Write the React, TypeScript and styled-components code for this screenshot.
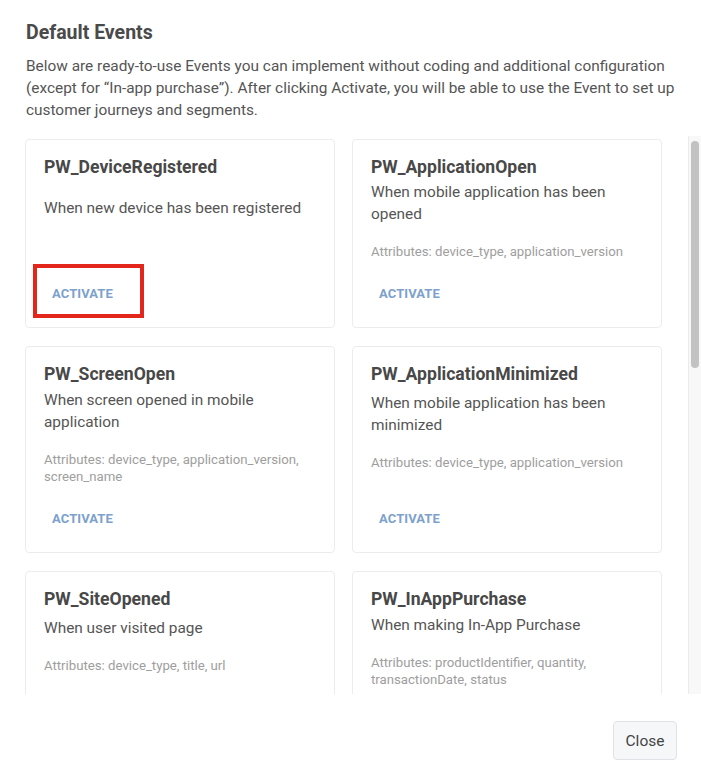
import React from "react";
import styled, { createGlobalStyle } from "styled-components";

const Global = createGlobalStyle`
  html, body { margin: 0; padding: 0; background: #ffffff; }
  body { font-family: Roboto, "Liberation Sans", Arial, sans-serif; }
  * { box-sizing: border-box; }
`;

const Dialog = styled.div`
  width: 701px;
  height: 782px;
  display: flex;
  flex-direction: column;
  background: #ffffff;
  padding-top: 20px;
`;

const Header = styled.div`
  padding: 0 20px 0 26px;
`;

const Title = styled.h2`
  margin: 0;
  font-size: 19.5px;
  line-height: 26px;
  font-weight: 700;
  color: #4a4a4a;
`;

const Intro = styled.p`
  margin: 9px 0 0;
  font-size: 15.4px;
  line-height: 22px;
  color: #555555;
`;

const ScrollArea = styled.div`
  display: flex;
  margin: 15px 0 0 25px;
  height: 558px;
`;

const Viewport = styled.div`
  flex: 1;
  overflow: hidden;
  padding-right: 27px;
`;

const ScrollTrack = styled.div`
  width: 13px;
  flex: none;
  background: #f8f8f8;
  border-left: 1px solid #ebebeb;
  padding: 5px 2px 0 2px;
`;

const ScrollThumb = styled.div<{ $size: number }>`
  height: ${(p) => p.$size}px;
  border-radius: 4px;
  background: #c2c2c2;
`;

const Grid = styled.div`
  display: grid;
  grid-template-columns: 310px 310px;
  column-gap: 17px;
  row-gap: 18px;
  padding-top: 3px;
`;

const Card = styled.div`
  position: relative;
  display: flex;
  flex-direction: column;
  border: 1px solid #ececec;
  border-radius: 4px;
  background: #ffffff;
  padding: 16px 18px 16px 18px;
`;

const EventName = styled.div`
  font-size: 17.6px;
  line-height: 22px;
  font-weight: 700;
  color: #484848;
`;

const Description = styled.div<{ $gap: number }>`
  margin-top: ${(p) => p.$gap}px;
  font-size: 15.4px;
  line-height: 22px;
  color: #555555;
`;

const Attributes = styled.div`
  margin-top: 18px;
  font-size: 13.2px;
  line-height: 17px;
  color: #9e9e9e;
`;

const ActivateButton = styled.button`
  margin-top: auto;
  align-self: flex-start;
  height: 36px;
  padding: 0 8px;
  border: none;
  background: transparent;
  font-family: inherit;
  font-size: 13px;
  font-weight: 700;
  letter-spacing: 0.1px;
  color: #7ca1cc;
  text-transform: uppercase;
  cursor: pointer;
`;

const Spacer = styled.div`
  height: 15px;
  flex: none;
`;

const Highlight = styled.div`
  position: absolute;
  left: 7px;
  top: 124px;
  width: 111px;
  height: 54px;
  border: 4px solid #e3261b;
  pointer-events: none;
`;

const Footer = styled.div`
  display: flex;
  justify-content: flex-end;
  padding: 27px 24px 22px 0;
`;

const CloseButton = styled.button`
  height: 39px;
  width: 64px;
  border: 1px solid #dfe3e8;
  border-radius: 4px;
  background: #f5f7f9;
  font-family: inherit;
  font-size: 15.5px;
  font-weight: 400;
  color: #444444;
  cursor: pointer;
`;

type EventItem = {
  name: string;
  desc: string;
  gap: number;
  attrs?: string;
  highlighted?: boolean;
};

const events: EventItem[] = [
  { name: "PW_DeviceRegistered", desc: "When new device has been registered", gap: 19, highlighted: true },
  { name: "PW_ApplicationOpen", desc: "When mobile application has been opened", gap: 3, attrs: "Attributes: device_type, application_version" },
  { name: "PW_ScreenOpen", desc: "When screen opened in mobile application", gap: 4, attrs: "Attributes: device_type, application_version, screen_name" },
  { name: "PW_ApplicationMinimized", desc: "When mobile application has been minimized", gap: 7, attrs: "Attributes: device_type, application_version" },
  { name: "PW_SiteOpened", desc: "When user visited page", gap: 7, attrs: "Attributes: device_type, title, url" },
  { name: "PW_InAppPurchase", desc: "When making In-App Purchase", gap: 4, attrs: "Attributes: productIdentifier, quantity, transactionDate, status" },
];

export default function App() {
  return (
    <>
      <Global />
      <Dialog>
        <Header>
          <Title>Default Events</Title>
          <Intro>
            Below are ready-to-use Events you can implement without coding and additional configuration
            (except for “In-app purchase”). After clicking Activate, you will be able to use the Event to set up
            customer journeys and segments.
          </Intro>
        </Header>
        <ScrollArea>
          <Viewport>
            <Grid>
              {events.map((e) => (
                <Card key={e.name}>
                  <EventName>{e.name}</EventName>
                  <Description $gap={e.gap}>{e.desc}</Description>
                  {e.attrs && <Attributes>{e.attrs}</Attributes>}
                  <Spacer />
                  <ActivateButton>Activate</ActivateButton>
                  {e.highlighted && <Highlight />}
                </Card>
              ))}
            </Grid>
          </Viewport>
          <ScrollTrack>
            <ScrollThumb $size={227} />
          </ScrollTrack>
        </ScrollArea>
        <Footer>
          <CloseButton>Close</CloseButton>
        </Footer>
      </Dialog>
    </>
  );
}
